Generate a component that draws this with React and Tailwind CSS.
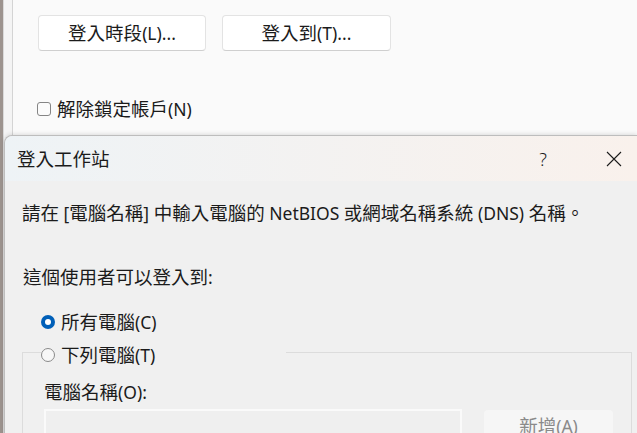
import React from 'react'

const font = "font-['Noto_Sans','Noto_Sans_CJK_TC',sans-serif]"

// JhengHei UI sets CJK a little larger than its Latin; mimic by shrinking the Latin runs
function T({ text }) {
  const runs = text.match(/[\u3000-\u9fff\uff00-\uffef]+|[^\u3000-\u9fff\uff00-\uffef]+/g) || []
  return (
    <span className="text-[18.5px]">
      {runs.map((r, i) =>
        /[\u3000-\u9fff\uff00-\uffef]/.test(r) ? (
          <span key={i}>{r}</span>
        ) : (
          <span key={i} className="text-[17.5px]">{r}</span>
        ),
      )}
    </span>
  )
}

function WinButton({ label, className = '' }) {
  return (
    <div
      className={`flex items-center justify-center rounded-[4px] border border-[#e3e3e3] border-b-[#cfcfcf] bg-white leading-[22px] text-[#1b1b1b] ${className}`}
    >
      <T text={label} />
    </div>
  )
}

export default function App() {
  return (
    <div className={`flex h-[433px] w-[637px] overflow-hidden bg-[#f4f4f4] ${font}`}>
      {/* window behind, left edge */}
      <div className="w-[3px] shrink-0 bg-[#9c938e]" />
      <div className="w-[1px] shrink-0 bg-[#d9d9d9]" />

      <div className="flex flex-1 flex-col">
        {/* user properties window */}
        <div className="ml-[8px] h-[135px] shrink-0 border-l border-[#d4d4d4] bg-[#fafafa] pl-[25px] pt-[15px]">
          <div className="flex gap-[16px]">
            <WinButton label="登入時段(L)..." className="h-[36px] w-[168px]" />
            <WinButton label="登入到(T)..." className="h-[36px] w-[169px]" />
          </div>
          <div className="mt-[47px] flex items-center gap-[6px] leading-[22px] text-[#1b1b1b]">
            <span className="-ml-px h-[14px] w-[14px] rounded-[3px] border border-[#858585] bg-[#fbfbfb]" />
            <T text="解除鎖定帳戶(N)" />
          </div>
        </div>

        {/* logon workstations dialog */}
        <div className="flex flex-1 flex-col rounded-tl-[8px] border-l border-t border-[#bdbdbd] bg-[#f0f0f0] shadow-[0_-1px_4px_rgba(0,0,0,0.12)]">
          <div className="flex h-[45px] shrink-0 items-center rounded-tl-[8px] bg-gradient-to-r from-[#eef3f6] to-[#f9f1ec] pl-[12px] leading-[22px] text-[#1b1b1b]">
            <T text="登入工作站" />
            <div className="ml-auto flex h-full items-center gap-[25px]">
              <span className="flex w-[46px] justify-center text-[18px] font-light text-[#1b1b1b]">?</span>
              <span className="flex w-[46px] justify-center">
                <svg width="16" height="16" viewBox="0 0 16 16">
                  <path d="M1 1 L15 15 M15 1 L1 15" stroke="#1b1b1b" strokeWidth="1.1" fill="none" />
                </svg>
              </span>
            </div>
          </div>

          <div className="pl-[17px] pt-[21px] leading-[22px] text-[#1b1b1b]">
            <T text="請在 [電腦名稱] 中輸入電腦的 NetBIOS 或網域名稱系統 (DNS) 名稱。" />
          </div>

          <div className="mt-[41px] pl-[18px] leading-[22px] text-[#1b1b1b]">
            <T text="這個使用者可以登入到:" />
          </div>

          <div className="mt-[22px] flex items-center gap-[6px] pl-[36px] leading-[22px] text-[#1b1b1b]">
            <span className="flex h-[14px] w-[14px] items-center justify-center rounded-full bg-[#005fb8]">
              <span className="h-[6px] w-[6px] rounded-full bg-white" />
            </span>
            <T text="所有電腦(C)" />
          </div>

          <fieldset className="ml-[17px] mt-[5px] w-[610px] shrink-0 border border-[#dcdcdc] pb-[20px] pl-[21px]">
            <legend className="ml-[-3px] flex w-[245px] items-center gap-[6px] pt-[6px] leading-[22px] text-[#1b1b1b]">
              <span className="h-[14px] w-[14px] rounded-full border border-[#8a8a8a] bg-[#f7f7f7]" />
              <T text="下列電腦(T)" />
            </legend>
            <div className="pt-[15px] leading-[22px] text-[#1b1b1b]">
              <T text="電腦名稱(O):" />
            </div>
            <div className="mt-[5px] flex items-start gap-[22px]">
              <div className="h-[30px] w-[418px] border-2 border-[#fafafa] bg-[#efefef]" />
              <div className="mt-px flex h-[32px] w-[129px] items-start justify-center rounded-[4px] bg-[#f6f6f6] pt-[5px] leading-[22px] text-[#8a8a8a]">
                <T text="新增(A)" />
              </div>
            </div>
          </fieldset>
        </div>
      </div>
    </div>
  )
}
